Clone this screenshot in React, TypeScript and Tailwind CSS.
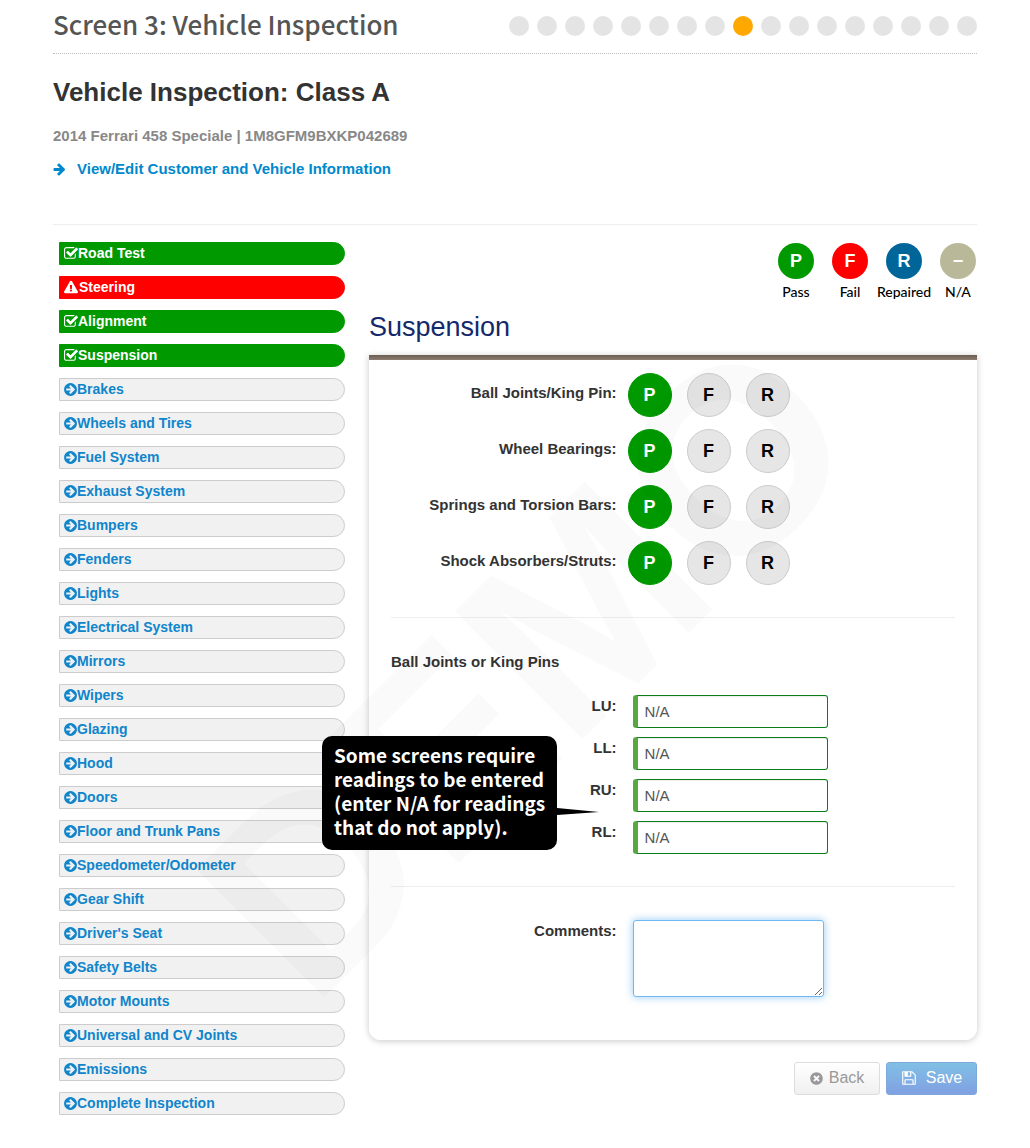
import { useState } from 'react';
import { FaExclamationTriangle, FaTimesCircle } from 'react-icons/fa';

type Status = 'pass' | 'fail' | 'open';

const steps = Array.from({ length: 17 }, (_, i) => i);
const currentStep = 8;

const sections: { name: string; status: Status }[] = [
  { name: 'Road Test', status: 'pass' },
  { name: 'Steering', status: 'fail' },
  { name: 'Alignment', status: 'pass' },
  { name: 'Suspension', status: 'pass' },
  { name: 'Brakes', status: 'open' },
  { name: 'Wheels and Tires', status: 'open' },
  { name: 'Fuel System', status: 'open' },
  { name: 'Exhaust System', status: 'open' },
  { name: 'Bumpers', status: 'open' },
  { name: 'Fenders', status: 'open' },
  { name: 'Lights', status: 'open' },
  { name: 'Electrical System', status: 'open' },
  { name: 'Mirrors', status: 'open' },
  { name: 'Wipers', status: 'open' },
  { name: 'Glazing', status: 'open' },
  { name: 'Hood', status: 'open' },
  { name: 'Doors', status: 'open' },
  { name: 'Floor and Trunk Pans', status: 'open' },
  { name: 'Speedometer/Odometer', status: 'open' },
  { name: 'Gear Shift', status: 'open' },
  { name: "Driver's Seat", status: 'open' },
  { name: 'Safety Belts', status: 'open' },
  { name: 'Motor Mounts', status: 'open' },
  { name: 'Universal and CV Joints', status: 'open' },
  { name: 'Emissions', status: 'open' },
  { name: 'Complete Inspection', status: 'open' },
];

const sectionStyles: Record<Status, string> = {
  pass: 'bg-[#009900] border-[#009900] text-white',
  fail: 'bg-[#ff0000] border-[#ff0000] text-white',
  open: 'bg-[#f1f1f1] border-[#cccccc] text-[#0f85cc]',
};

const legend = [
  { mark: 'P', label: 'Pass', color: 'bg-[#009900]' },
  { mark: 'F', label: 'Fail', color: 'bg-[#ff0000]' },
  { mark: 'R', label: 'Repaired', color: 'bg-[#006699]' },
  { mark: '−', label: 'N/A', color: 'bg-[#b9b99a]' },
];

const checks = ['Ball Joints/King Pin', 'Wheel Bearings', 'Springs and Torsion Bars', 'Shock Absorbers/Struts'];
const readings = ['LU', 'LL', 'RU', 'RL'];

const iconPaths = {
  check:
    'M1472 930v318q0 119-84.5 203.5t-203.5 84.5h-832q-119 0-203.5-84.5t-84.5-203.5v-832q0-119 84.5-203.5t203.5-84.5h832q63 0 117 25 15 7 18 23 3 17-9 29l-49 49q-10 10-23 10-3 0-9-2-23-6-45-6h-832q-66 0-113 47t-47 113v832q0 66 47 113t113 47h832q66 0 113-47t47-113v-254q0-13 9-22l64-64q10-10 23-10 6 0 12 3 20 8 20 29zm231-489l-814 814q-24 24-57 24t-57-24l-430-430q-24-24-24-57t24-57l110-110q24-24 57-24t57 24l263 263 647-647q24-24 57-24t57 24l110 110q24 24 24 57t-24 57z',
  circleArrow:
    'M1413 896q0-27-18-45l-91-91-362-362q-18-18-45-18t-45 18l-91 91q-18 18-18 45t18 45l189 189h-502q-26 0-45 19t-19 45v128q0 26 19 45t45 19h502l-189 189q-19 19-19 45t19 45l91 91q18 18 45 18t45-18l362-362 91-91q18-18 18-45zm251 0q0 209-103 385.5t-279.5 279.5-385.5 103-385.5-103-279.5-279.5-103-385.5 103-385.5 279.5-279.5 385.5-103 385.5 103 279.5 279.5 103 385.5z',
  arrow:
    'M1600 960q0 54-37 91l-651 651q-39 37-91 37-51 0-90-37l-75-75q-38-38-38-91t38-91l293-293h-704q-52 0-84.5-37.5t-32.5-90.5v-128q0-53 32.5-90.5t84.5-37.5h704l-293-294q-38-36-38-90t38-90l75-75q38-38 90-38 53 0 91 38l651 651q37 35 37 90z',
  floppy:
    'M512 1536h768v-384h-768v384zm896 0h128v-896q0-14-10-38.5t-20-34.5l-281-281q-10-10-34-20t-39-10v416q0 40-28 68t-68 28h-576q-40 0-68-28t-28-68v-416h-128v1280h128v-416q0-40 28-68t68-28h832q40 0 68 28t28 68v416zm-384-928v-320q0-13-9.5-22.5t-22.5-9.5h-192q-13 0-22.5 9.5t-9.5 22.5v320q0 13 9.5 22.5t22.5 9.5h192q13 0 22.5-9.5t9.5-22.5zm640 32v928q0 40-28 68t-68 28h-1344q-40 0-68-28t-28-68v-1344q0-40 28-68t68-28h928q40 0 88 20t76 48l280 280q28 28 48 76t20 88z',
};

const Icon = ({ name, box = '0 0 1792 1792', className }: { name: keyof typeof iconPaths; box?: string; className: string }) => (
  <svg viewBox={box} className={className} fill="currentColor" aria-hidden="true">
    <path d={iconPaths[name]} />
  </svg>
);

const SectionIcon = ({ status }: { status: Status }) => {
  if (status === 'pass') return <Icon name="check" box="64 0 1664 1792" className="h-[15px] w-[14px]" />;
  if (status === 'fail') return <FaExclamationTriangle className="mr-px size-[14px]" />;
  return <Icon name="circleArrow" box="128 0 1536 1792" className="h-[15px] w-[13px]" />;
};

const Header = () => (
  <header className="flex h-[54px] items-start justify-between border-b border-dotted border-[#bbbbbb]">
    <h1 className="text-[26px] leading-[48px] font-medium text-[#555555] font-['Noto_Sans_CJK_SC',sans-serif]">
      Screen 3: Vehicle Inspection
    </h1>
    <ol className="flex gap-2 pt-4">
      {steps.map(step => (
        <li
          key={step}
          className={`size-5 rounded-full ${step === currentStep ? 'bg-[#ffa800]' : 'bg-[#e4e4e4]'}`}
        />
      ))}
    </ol>
  </header>
);

const Sidebar = () => (
  <nav className="w-[286px] shrink-0">
    <ul className="flex flex-col gap-[11px]">
      {sections.map(({ name, status }) => (
        <li key={name}>
          <a
            href="#"
            className={`flex h-[23px] items-center rounded-r-full border pb-px pl-1 text-[14px] leading-5 font-bold ${sectionStyles[status]}`}
          >
            <SectionIcon status={status} />
            {name}
          </a>
        </li>
      ))}
    </ul>
  </nav>
);

const Legend = () => (
  <ul className="mr-px flex justify-end gap-[18px]">
    {legend.map(({ mark, label, color }) => (
      <li key={label} className="flex w-9 flex-col items-center">
        <span className={`flex size-9 items-center justify-center rounded-full text-[18px] font-bold text-white ${color}`}>
          {mark}
        </span>
        <span className="mt-1 text-[14px] leading-[18px] font-medium whitespace-nowrap text-black font-[Lato,sans-serif]">
          {label}
        </span>
      </li>
    ))}
  </ul>
);

const CheckRow = ({ label }: { label: string }) => {
  const [value, setValue] = useState('P');

  return (
    <div role="group" aria-label={label} className="flex gap-[11px]">
      <span className="w-2/5 pt-[10px] text-right leading-5 font-bold">{label}:</span>
      <div className="flex gap-[15px]">
        {['P', 'F', 'R'].map(mark => (
          <button
            key={mark}
            type="button"
            aria-pressed={value === mark}
            onClick={() => setValue(mark)}
            className={`size-11 rounded-full border text-[18px] font-bold ${
              value === mark ? 'border-[#009900] bg-[#009900] text-white' : 'border-[#cccccc] bg-[#e6e6e6] text-black'
            }`}
          >
            {mark}
          </button>
        ))}
      </div>
    </div>
  );
};

const ReadingRow = ({ label }: { label: string }) => (
  <div className="flex gap-4">
    <label htmlFor={`reading-${label}`} className="w-2/5 text-right leading-[22px] font-bold">
      {label}:
    </label>
    <input
      id={`reading-${label}`}
      type="text"
      defaultValue="N/A"
      className="h-[33px] w-[195px] rounded-[3px] border border-l-[5px] border-[#0b7f17] border-l-[#56a83f] bg-white pl-[7px] text-[15px] text-[#555555] shadow-[inset_0_1px_1px_rgba(0,0,0,0.075)]"
    />
  </div>
);

const Callout = () => (
  <div className="absolute top-[736px] left-[322px] rounded-[10px] bg-black px-3 pt-[7px] pb-[11px] text-[19px] leading-6 font-bold whitespace-nowrap text-white font-['Noto_Sans_CJK_SC',sans-serif]">
    Some screens require
    <br />
    readings to be entered
    <br />
    (enter N/A for readings
    <br />
    that do not apply).
    <svg viewBox="0 0 42 8" className="absolute top-[72px] left-full h-2 w-[42px]" aria-hidden="true">
      <path d="M0 0L42 4L0 7Z" fill="#000000" />
    </svg>
  </div>
);

const App = () => {
  return (
    <div className="relative overflow-hidden bg-white px-[53px] pb-8 text-[15px] text-[#333333] font-['Liberation_Sans',Arial,sans-serif]">
      <Header />

      <section className="border-b border-[#eeeeee] pt-[22px] pb-[45px]">
        <h2 className="text-[26px] leading-8 font-bold">Vehicle Inspection: Class A</h2>
        <p className="mt-[18px] leading-5 font-bold text-[#888888]">2014 Ferrari 458 Speciale | 1M8GFM9BXKP042689</p>
        <a href="#" className="mt-[13px] flex items-center gap-[11px] leading-5 font-bold text-[#0088cc]">
          <Icon name="arrow" box="64 0 1664 1792" className="h-[14px] w-[13px]" />
          View/Edit Customer and Vehicle Information
        </a>
      </section>

      <div className="flex gap-6 pt-[17px] pl-[6px]">
        <Sidebar />

        <main className="min-w-0 flex-1">
          <div className="pt-px">
            <Legend />
          </div>
          <h3 className="mt-2 text-[27px] leading-9 text-[#14296b]">Suspension</h3>

          <div className="mt-[10px] rounded-b-xl shadow-[0_1px_7px_rgba(0,0,0,0.22)]">
            <div className="h-[5px] bg-linear-to-b from-[#6c5b50] to-[#8b7c71]" />
            <div className="rounded-b-xl bg-white px-[22px] pt-[13px] pb-[43px]">
              <div className="flex flex-col gap-3 border-b border-[#eeeeee] pb-8">
                {checks.map(label => (
                  <CheckRow key={label} label={label} />
                ))}
              </div>

              <h4 className="mt-[34px] leading-5 font-bold">Ball Joints or King Pins</h4>
              <div className="mt-[23px] flex flex-col gap-[9px] border-b border-[#eeeeee] pb-8">
                {readings.map(label => (
                  <ReadingRow key={label} label={label} />
                ))}
              </div>

              <div className="mt-[33px] flex gap-4">
                <label htmlFor="comments" className="w-2/5 text-right leading-[22px] font-bold">
                  Comments:
                </label>
                <textarea
                  id="comments"
                  className="h-[77px] w-[191px] rounded-[3px] border border-[#72b8f0] bg-white p-2 shadow-[0_0_8px_rgba(82,168,236,0.6)] outline-none"
                />
              </div>
            </div>
          </div>

          <div className="mt-[22px] flex justify-end gap-[6px] text-[16px]">
            <button
              type="button"
              className="flex h-[33px] w-[86px] items-center justify-center gap-[6px] rounded-[3px] border border-[#dddddd] bg-linear-to-b from-white to-[#f0f0f0] pb-px text-[#999999]"
            >
              <FaTimesCircle className="size-[13px]" />
              Back
            </button>
            <button
              type="button"
              className="flex h-[33px] w-[91px] items-center justify-center gap-[9px] rounded-[3px] border border-[#7fa8da] bg-linear-to-b from-[#80c0e5] to-[#80a0e2] pb-px text-white"
            >
              <Icon name="floppy" className="size-4" />
              Save
            </button>
          </div>
        </main>
      </div>

      {/* Diagonal watermark laid over the whole screen */}
      <div
        aria-hidden="true"
        className="pointer-events-none absolute top-[773px] left-[312px] origin-[0_237px] -rotate-45 text-[263px] leading-[292px] font-bold whitespace-nowrap text-black/[0.02] select-none"
      >
        DEMO
      </div>

      <Callout />
    </div>
  );
};

export default App;
